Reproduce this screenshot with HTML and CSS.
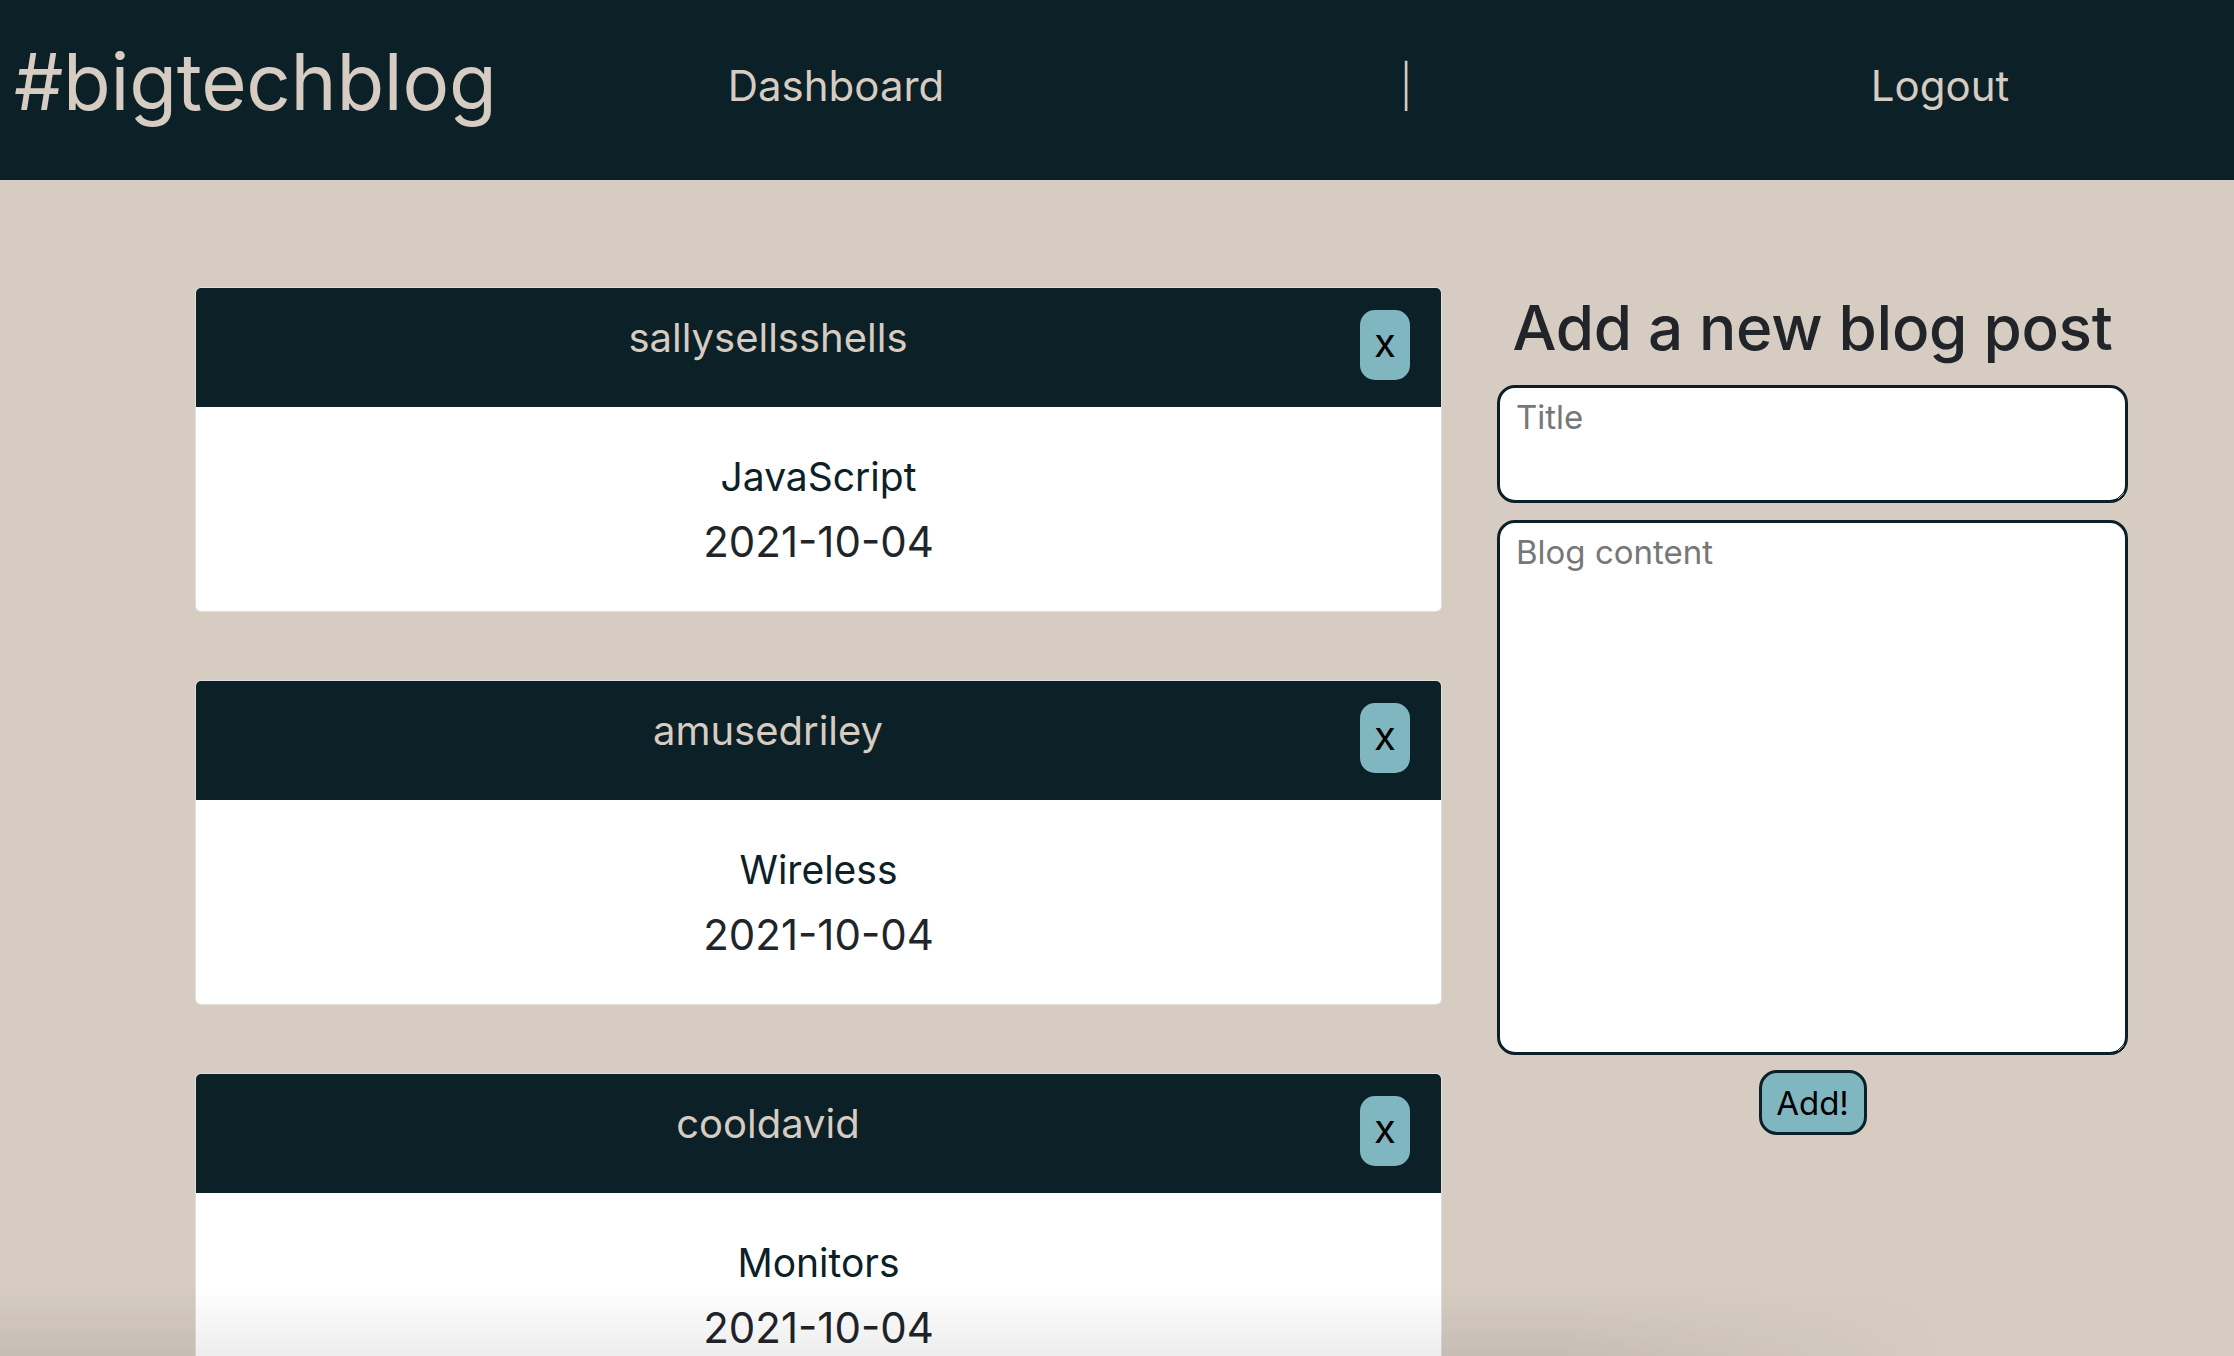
FILE: index.html
```html
<!DOCTYPE html>
<html lang="en">
<head>
<meta charset="utf-8">
<title>#bigtechblog</title>
<link rel="stylesheet" href="styles.css">
</head>
<body>
<header class="topbar">
  <div class="brand">#bigtechblog</div>
  <a class="nav-link nav-dash" href="#">Dashboard</a>
  <span class="nav-sep">|</span>
  <a class="nav-link nav-logout" href="#">Logout</a>
</header>
<main class="page">
  <section class="posts">
    <article class="card">
      <div class="card-head">
        <h2 class="card-user">sallysellsshells</h2>
        <button class="del-btn">x</button>
      </div>
      <div class="card-body">
        <p class="card-title">JavaScript</p>
        <p class="card-date">2021-10-04</p>
      </div>
    </article>
    <article class="card">
      <div class="card-head">
        <h2 class="card-user">amusedriley</h2>
        <button class="del-btn">x</button>
      </div>
      <div class="card-body">
        <p class="card-title">Wireless</p>
        <p class="card-date">2021-10-04</p>
      </div>
    </article>
    <article class="card">
      <div class="card-head">
        <h2 class="card-user">cooldavid</h2>
        <button class="del-btn">x</button>
      </div>
      <div class="card-body">
        <p class="card-title">Monitors</p>
        <p class="card-date">2021-10-04</p>
      </div>
    </article>
  </section>
  <aside class="new-post">
    <h1 class="new-title">Add a new blog post</h1>
    <form class="post-form">
      <textarea class="field field-title" placeholder="Title"></textarea>
      <textarea class="field field-content" placeholder="Blog content"></textarea>
      <button type="button" class="add-btn">Add!</button>
    </form>
  </aside>
</main>
<div class="bottom-shade"></div>
</body>
</html>
```
FILE: styles.css
```css
* { box-sizing: border-box; }
html, body { margin: 0; padding: 0; }
body {
  background: #d6ccc2;
  font-family: Inter, "Noto Sans", "Liberation Sans", sans-serif;
  color: #212529;
  overflow: hidden;
  height: 1356px;
}
.topbar {
  height: 180px;
  background: #0b2027;
  display: grid;
  grid-template-columns: 558px 558px 558px 560px;
  align-items: start;
  color: #d6ccc2;
}
.brand {
  font-size: 78px;
  line-height: 94px;
  padding: 35px 0 0 14px;
  letter-spacing: -0.3px;
}
.nav-link, .nav-sep {
  color: #d6ccc2;
  text-decoration: none;
  font-size: 42px;
  line-height: 50px;
  margin-top: 61px;
  text-align: center;
}
.nav-dash { padding-right: 2px; }
.nav-sep { padding-left: 22px; font-weight: 300; }
.nav-logout { padding-right: 28px; }

.page {
  display: flex;
  align-items: flex-start;
  gap: 55px;
  padding: 107px 106px 0 195px;
}
.posts { width: 1247px; flex: none; }
.card {
  border: 1px solid rgba(0,0,0,0.125);
  border-radius: 6px;
  overflow: hidden;
  background: #fff;
  margin-bottom: 68px;
}
.card-head {
  background: #0b2027;
  display: flex;
  align-items: flex-start;
  gap: 20px;
  padding: 22px 31px 27px 0;
}
.card-user {
  flex: 1;
  margin: 0;
  text-align: center;
  font-weight: 400;
  font-size: 40px;
  line-height: 56px;
  color: #d6ccc2;
}
.del-btn {
  width: 50px;
  height: 70px;
  border: none;
  border-radius: 15px;
  background: #80b6c0;
  color: #000;
  font-family: Inter, "Liberation Sans", sans-serif;
  font-size: 40px;
  line-height: 1;
  padding: 0 0 4px;
}
.card-body {
  padding: 44px 0 44px;
  text-align: center;
}
.card-title {
  margin: 0;
  font-size: 39px;
  line-height: 52px;
  color: #0b2027;
}
.card-date {
  margin: 14px 0 0;
  font-size: 42px;
  line-height: 50px;
  color: #212529;
}

.new-post {
  width: 631px;
  flex: none;
  text-align: center;
}
.new-title {
  margin: 5px 0 21px;
  font-size: 62px;
  line-height: 72px;
  font-weight: 500;
  letter-spacing: -0.3px;
  color: #212529;
}
.post-form {
  display: flex;
  flex-direction: column;
  align-items: center;
}
.field {
  display: block;
  width: 631px;
  border: 3px solid #0b2027;
  border-radius: 18px;
  background: #fff;
  font-family: Inter, "Liberation Sans", sans-serif;
  font-size: 33px;
  line-height: 40px;
  padding: 9px 16px;
  color: #212529;
  outline: none;
}
.field::placeholder { color: #777; }
.field-title { height: 118px; }
.field-content { height: 535px; margin-top: 17px; }
.add-btn {
  margin-top: 15px;
  width: 108px;
  height: 65px;
  border: 3px solid #0b2027;
  border-radius: 18px;
  background: #80b6c0;
  color: #000;
  font-family: Inter, "Liberation Sans", sans-serif;
  font-size: 33px;
  padding: 0;
}
.bottom-shade {
  position: fixed;
  left: 0;
  bottom: 0;
  width: 1950px;
  height: 70px;
  pointer-events: none;
  background: linear-gradient(to bottom, rgba(0,0,0,0), rgba(0,0,0,0.07));
  -webkit-mask-image: linear-gradient(to right, #000 80%, transparent);
  mask-image: linear-gradient(to right, #000 80%, transparent);
}
```
